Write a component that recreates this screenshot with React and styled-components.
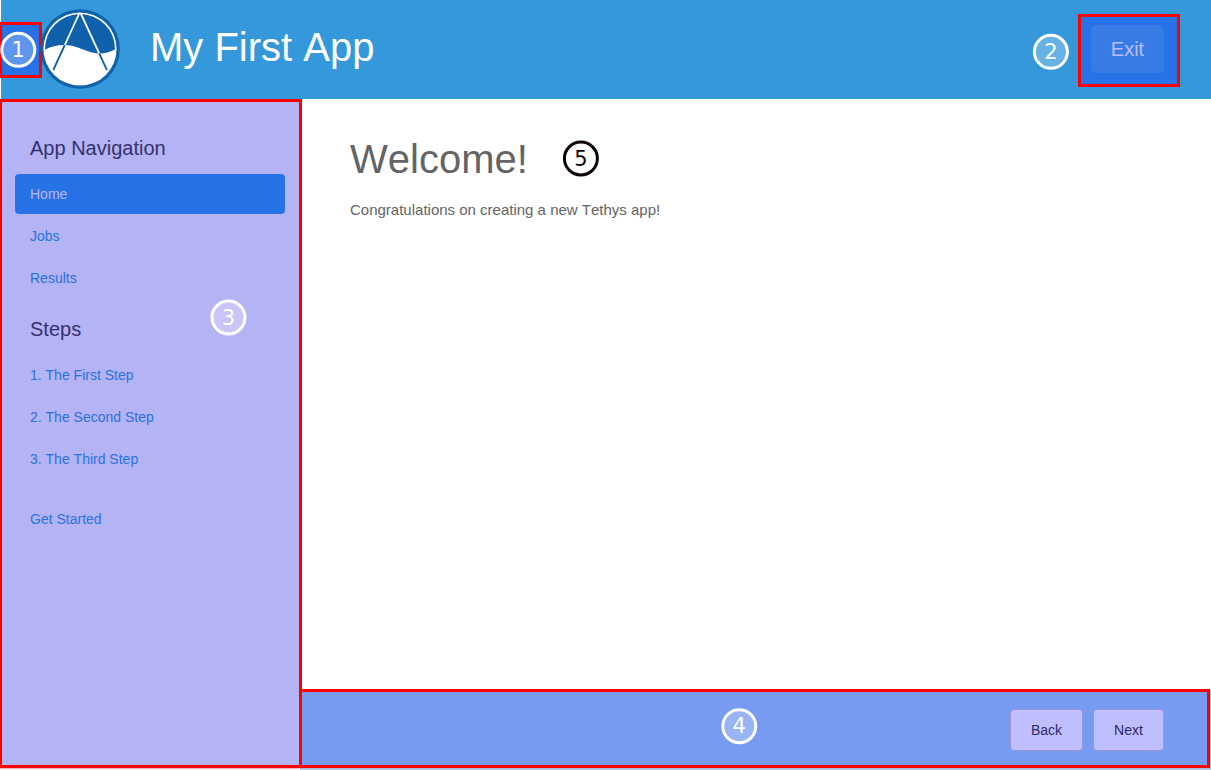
import React from "react";
import styled, { createGlobalStyle } from "styled-components";

const GlobalStyle = createGlobalStyle`
  * { box-sizing: border-box; }
  body {
    margin: 0;
    background: #fff;
    font-family: "Liberation Sans", Arial, sans-serif;
    font-kerning: none;
  }
`;

const Page = styled.div`
  position: relative;
  width: 1211px;
  height: 770px;
  display: flex;
  flex-direction: column;
  overflow: hidden;
`;

const Header = styled.header`
  flex: 0 0 99px;
  margin-left: 1px;
  background: #3498db;
  display: flex;
  align-items: flex-start;
`;

const Toggle = styled.div`
  width: 42px;
  height: 56px;
  margin: 22px 0 0 -1px;
  background: #2872e7;
  border: 3px solid #f00;
  border-left-width: 2px;
  flex: none;
`;

const Logo = styled.svg`
  width: 80px;
  height: 80px;
  margin: 9px 0 0 -2px;
  flex: none;
`;

const AppTitle = styled.div`
  margin: 24px 0 0 30px;
  font-size: 40px;
  line-height: 46px;
  color: #fff;
`;

const ExitArea = styled.div`
  width: 102px;
  height: 73px;
  margin: 14px 31px 0 auto;
  padding: 8px 13px 0 10px;
  background: #2872e7;
  border: 3px solid #f00;
`;

const ExitButton = styled.button`
  display: block;
  width: 73px;
  height: 48px;
  padding: 0;
  border: 0;
  border-radius: 5px;
  background: #377ce5;
  color: #bcbcfa;
  font: 20px "Liberation Sans", Arial, sans-serif;
`;

const Body = styled.div`
  flex: 1;
  display: flex;
  min-height: 0;
`;

const Sidebar = styled.nav`
  flex: 0 0 302px;
  height: 669px;
  padding: 32px 14px 0 13px;
  background: #b4b3f3;
  border: 3px solid #f00;
  border-left-width: 2px;
  box-shadow: 0 1px 0 #ffb3b3;
`;

const NavTitle = styled.h2`
  margin: ${(p) => p.$top || 0}px 0 ${(p) => p.$bottom}px;
  padding-left: 15px;
  font-size: 20px;
  line-height: 28px;
  font-weight: 400;
  color: #34326f;
`;

const NavItem = styled.a`
  display: block;
  height: 40px;
  margin: ${(p) => p.$top || 0}px 0 2px;
  padding-left: 15px;
  border-radius: 4px;
  font-size: 14px;
  line-height: 40px;
  background: ${(p) => (p.$active ? "#2872e7" : "transparent")};
  color: ${(p) => (p.$active ? "#b9b9f9" : "#2a72e0")};
`;

const Main = styled.main`
  flex: 1;
  display: flex;
  flex-direction: column;
`;

const Content = styled.section`
  flex: 0 0 590px;
  padding: 37px 48px 0;
  color: #646464;
`;

const Heading = styled.h1`
  margin: 0;
  font-size: 40px;
  line-height: 46px;
  font-weight: 400;
`;

const Message = styled.p`
  margin: 18px 0 0;
  font-size: 15px;
  line-height: 20px;
`;

const Actions = styled.footer`
  height: 79px;
  width: 911px;
  margin-left: -3px;
  padding: 17px 43px 0 0;
  display: flex;
  justify-content: flex-end;
  gap: 10px;
  background: #769bf1;
  border: 3px solid #f00;
  box-shadow: 1px 1px 0 #a9b7da, 1px 2px 0 #b7c9e4;
`;

const ActionButton = styled.button`
  width: ${(p) => p.$width}px;
  height: 42px;
  padding: 0;
  border: 1px solid #9c95d8;
  border-radius: 4px;
  background: #c0bffe;
  color: #2c2a69;
  font: 14px "Liberation Sans", Arial, sans-serif;
`;

const Marker = styled.div`
  position: absolute;
  left: 0;
  top: 0;
  transform: translate(${(p) => p.$x}px, ${(p) => p.$y}px);
  width: 36px;
  height: 36px;
  border: 3px solid ${(p) => (p.$dark ? "#0c0206" : "#fff")};
  border-radius: 50%;
  background: rgba(255, 255, 255, 0.25);
  color: ${(p) => (p.$dark ? "#0c0206" : "#fff")};
  font: 21px/31px "DejaVu Sans", sans-serif;
  text-align: center;
`;

const steps = ["1. The First Step", "2. The Second Step", "3. The Third Step"];

const markers = [
  { label: "1", x: 0.3, y: 31.8 },
  { label: "2", x: 1032.9, y: 33.8 },
  { label: "3", x: 210.5, y: 299.5 },
  { label: "4", x: 721.3, y: 708.2 },
  { label: "5", x: 562.9, y: 140.5, dark: true },
];

function TethysLogo() {
  return (
    <Logo viewBox="0 0 80 80">
      <circle cx="40" cy="40" r="39.8" fill="#0e61aa" />
      <circle cx="40" cy="40" r="36.6" fill="#fff" />
      <path
        d="M5.2 40.5L5 40A35 35 0 0 1 75 40L74.8 40.5C67 44.8 60 45.2 52 43.4C43 41.2 38 37.5 28.5 36.2Q16 34.8 5.2 40.5Z"
        fill="#0e61aa"
      />
      <path d="M39.2 4.5L24.8 36M40.8 4.5L59.2 44.3" stroke="#fff" strokeWidth="1.8" />
      <path d="M24.8 36L13.3 61M59.2 44.3L66.9 61" stroke="#0e61aa" strokeWidth="1.8" />
    </Logo>
  );
}

export default function App() {
  return (
    <Page>
      <GlobalStyle />
      <Header>
        <Toggle />
        <TethysLogo />
        <AppTitle>My First App</AppTitle>
        <ExitArea>
          <ExitButton>Exit</ExitButton>
        </ExitArea>
      </Header>
      <Body>
        <Sidebar>
          <NavTitle $bottom={12}>App Navigation</NavTitle>
          <NavItem $active>Home</NavItem>
          <NavItem>Jobs</NavItem>
          <NavItem>Results</NavItem>
          <NavTitle $top={17} $bottom={12}>Steps</NavTitle>
          {steps.map((s) => (
            <NavItem key={s}>{s}</NavItem>
          ))}
          <NavItem $top={20}>Get Started</NavItem>
        </Sidebar>
        <Main>
          <Content>
            <Heading>Welcome!</Heading>
            <Message>Congratulations on creating a new Tethys app!</Message>
          </Content>
          <Actions>
            <ActionButton $width={73}>Back</ActionButton>
            <ActionButton $width={71}>Next</ActionButton>
          </Actions>
        </Main>
      </Body>
      {markers.map((m) => (
        <Marker key={m.label} $x={m.x} $y={m.y} $dark={m.dark}>
          {m.label}
        </Marker>
      ))}
    </Page>
  );
}
